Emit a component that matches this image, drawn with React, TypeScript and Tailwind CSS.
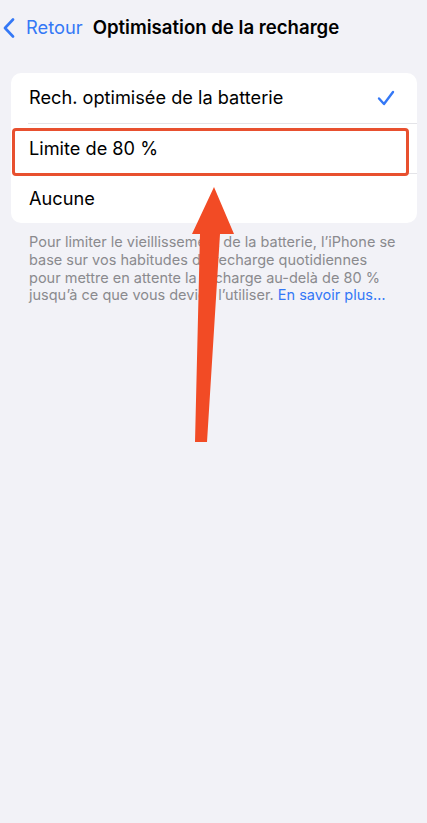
import React from "react";

export default function App() {
  return (
    <div
      className="relative w-[427px] h-[823px] overflow-hidden bg-[#f2f2f7]"
      style={{ fontFamily: "Inter, 'Liberation Sans', sans-serif" }}
    >
      {/* Nav bar */}
      <div className="h-[56px] flex items-center pl-[3px]">
        <svg width="12" height="20" viewBox="0 0 12 20" className="mr-[11px]">
          <path
            d="M10 1.5 L2 10 L10 18.5"
            fill="none"
            stroke="#3478f6"
            strokeWidth="2.6"
            strokeLinecap="round"
            strokeLinejoin="round"
          />
        </svg>
        <span className="text-[18.3px] text-[#3478f6]">Retour</span>
        <span className="ml-[10px] text-[18.6px] font-semibold text-black">
          Optimisation de la recharge
        </span>
      </div>

      {/* Card */}
      <div className="mt-[17px] mx-[11px] w-[406px] rounded-[10px] bg-white">
        <div className="h-[50px] flex items-center justify-between pl-[18px] pr-[22px]">
          <span className="text-[18.2px] text-black">Rech. optimisée de la batterie</span>
          <svg width="18" height="16" viewBox="0 0 18 16">
            <path
              d="M2 8.5 L7 14 L16 2"
              fill="none"
              stroke="#3478f6"
              strokeWidth="2.4"
              strokeLinecap="round"
              strokeLinejoin="round"
            />
          </svg>
        </div>
        <div className="ml-[17px] h-px bg-[#e4e4e8]" />
        <div className="h-[49px] flex items-center pl-[18px]">
          <span className="text-[18.2px] text-black">Limite de 80 %</span>
        </div>
        <div className="ml-[17px] h-px bg-[#e4e4e8]" />
        <div className="h-[49px] flex items-center pl-[18px]">
          <span className="text-[18.2px] text-black">Aucune</span>
        </div>
      </div>

      {/* Footer */}
      <p className="mt-[10px] pl-[29px] pr-[10px] text-[14.5px] leading-[17.8px] text-[#8a8a8e]">
        Pour limiter le vieillissement de la batterie, l’iPhone se
        <br />
        base sur vos habitudes de recharge quotidiennes
        <br />
        pour mettre en attente la recharge au-delà de 80 %
        <br />
        jusqu’à ce que vous deviez l’utiliser.{" "}
        <span className="text-[#3478f6]">En savoir plus…</span>
      </p>

      {/* Annotation box */}
      <div className="absolute left-[12px] top-[128px] w-[397px] h-[48px] rounded-[4px] border-[3px] border-[#e8502f]" />

      {/* Annotation arrow */}
      <svg
        className="absolute left-0 top-0"
        width="427"
        height="823"
        viewBox="0 0 427 823"
      >
        <polygon
          points="214,187 234,234 220,234 207,442 195,442 200,234 192,234"
          fill="#f24b25"
        />
      </svg>
    </div>
  );
}
